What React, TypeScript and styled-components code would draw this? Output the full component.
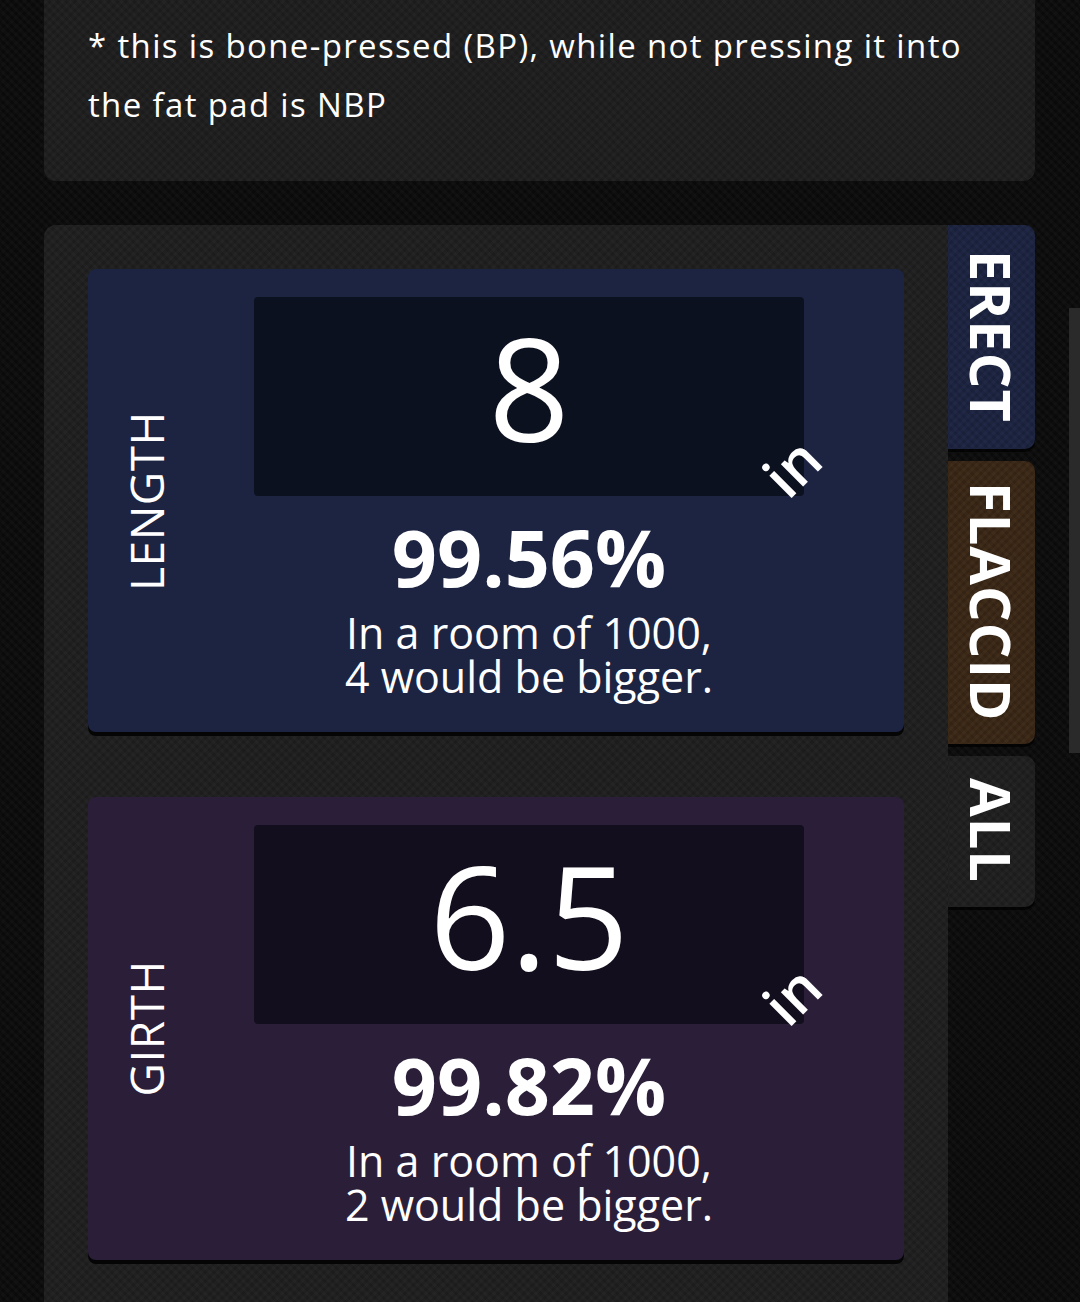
import styled, { createGlobalStyle } from "styled-components";

const GlobalStyle = createGlobalStyle`
  html, body {
    margin: 0;
    padding: 0;
    background-color: #0d0d0d;
    background-image:
      repeating-linear-gradient(45deg, rgba(255,255,255,0.018) 0 3px, transparent 3px 6px),
      repeating-linear-gradient(-45deg, rgba(0,0,0,0.25) 0 3px, transparent 3px 6px);
    font-family: "Open Sans", Lato, sans-serif;
    color: #fff;
    overflow: hidden;
  }
`;

const texture = `
  background-image:
    repeating-linear-gradient(45deg, rgba(255,255,255,0.018) 0 3px, transparent 3px 6px),
    repeating-linear-gradient(-45deg, rgba(0,0,0,0.12) 0 3px, transparent 3px 6px);
`;

type Stat = {
  label: string;
  value: string;
  percent: string;
  bigger: number;
  bg: string;
  box: string;
};

const stats: Stat[] = [
  { label: "LENGTH", value: "8", percent: "99.56%", bigger: 4, bg: "#1c2442", box: "#0c1120" },
  { label: "GIRTH", value: "6.5", percent: "99.82%", bigger: 2, bg: "#2b1e39", box: "#130e1d" },
];

const tabs = [
  { name: "ERECT", bg: "#1c2442", height: 224 },
  { name: "FLACCID", bg: "#3b2816", height: 283 },
  { name: "ALL", bg: "#202020", height: 151 },
];

const App = () => {
  return (
    <Page>
      <GlobalStyle />
      <Note>
        * this is bone-pressed (BP), while not pressing it into
        <br />
        the fat pad is NBP
      </Note>
      <Main>
        <Panel>
          {stats.map((s) => (
            <Card key={s.label} $bg={s.bg}>
              <Label>{s.label}</Label>
              <Content>
                <ValueBox $bg={s.box}>
                  <Value>{s.value}</Value>
                  <Unit>in</Unit>
                </ValueBox>
                <Percent>{s.percent}</Percent>
                <Room>
                  In a room of 1000,
                  <br />
                  {s.bigger} would be bigger.
                </Room>
              </Content>
            </Card>
          ))}
        </Panel>
        <Tabs>
          {tabs.map((t) => (
            <Tab key={t.name} $bg={t.bg} $height={t.height}>
              {t.name}
            </Tab>
          ))}
        </Tabs>
      </Main>
      <ScrollThumb />
    </Page>
  );
};

export default App;

const Page = styled.div`
  position: relative;
  width: 1080px;
  height: 1302px;
  padding-left: 44px;
  box-sizing: border-box;
  overflow: hidden;
`;

const Note = styled.div`
  width: 991px;
  box-sizing: border-box;
  margin-top: -20px;
  padding: 36px 44px 47px;
  background-color: #1f1f1f;
  ${texture}
  border-radius: 12px;
  font-size: 33px;
  line-height: 59px;
  font-weight: 500;
  letter-spacing: 1.35px;
`;

const Main = styled.div`
  display: flex;
  margin-top: 44px;
`;

const Panel = styled.div`
  width: 904px;
  box-sizing: border-box;
  padding: 44px 44px 44px;
  display: flex;
  flex-direction: column;
  gap: 65px;
  background-color: #202020;
  ${texture}
  border-radius: 12px 0 0 0;
`;

const Card = styled.div<{ $bg: string }>`
  height: 463px;
  display: grid;
  grid-template-columns: 166px 550px;
  align-items: start;
  padding-top: 28px;
  box-sizing: border-box;
  background: ${(p) => p.$bg};
  border-radius: 8px;
  box-shadow: 0 4px 0 #050505;
  position: relative;
`;

const Label = styled.div`
  align-self: center;
  justify-self: start;
  margin-left: 35px;
  margin-top: -28px;
  writing-mode: vertical-rl;
  transform: rotate(180deg);
  font-size: 46px;
  font-weight: 400;
  line-height: 1;
  letter-spacing: 0.5px;
`;

const Content = styled.div`
  display: flex;
  flex-direction: column;
  align-items: center;
`;

const ValueBox = styled.div<{ $bg: string }>`
  position: relative;
  width: 550px;
  height: 199px;
  box-sizing: border-box;
  padding-bottom: 20px;
  background: ${(p) => p.$bg};
  border-radius: 4px;
  display: flex;
  align-items: center;
  justify-content: center;
`;

const Value = styled.div`
  font-size: 142px;
  font-weight: 400;
  line-height: 1;
`;

const Unit = styled.div`
  position: absolute;
  right: -14px;
  bottom: 0px;
  transform: rotate(-45deg);
  font-size: 58px;
  font-weight: 600;
  line-height: 1;
`;

const Percent = styled.div`
  margin-top: 18px;
  font-size: 79px;
  font-weight: 700;
  line-height: 1.1;
`;

const Room = styled.div`
  margin-top: 10px;
  font-size: 43px;
  line-height: 44px;
  text-align: center;
`;

const Tabs = styled.div`
  display: flex;
  flex-direction: column;
  gap: 12px;
`;

const Tab = styled.div<{ $bg: string; $height: number }>`
  width: 87px;
  height: ${(p) => p.$height}px;
  box-sizing: border-box;
  padding-bottom: 2px;
  display: flex;
  align-items: center;
  justify-content: center;
  writing-mode: vertical-rl;
  background-color: ${(p) => p.$bg};
  ${texture}
  border-radius: 0 10px 10px 0;
  box-shadow: 0 3px 0 rgba(0, 0, 0, 0.7);
  font-size: 56px;
  font-weight: 700;
  line-height: 1;
  letter-spacing: 1px;
`;

const ScrollThumb = styled.div`
  position: absolute;
  right: 0;
  top: 308px;
  width: 11px;
  height: 445px;
  background: #2a2a2a;
`;
